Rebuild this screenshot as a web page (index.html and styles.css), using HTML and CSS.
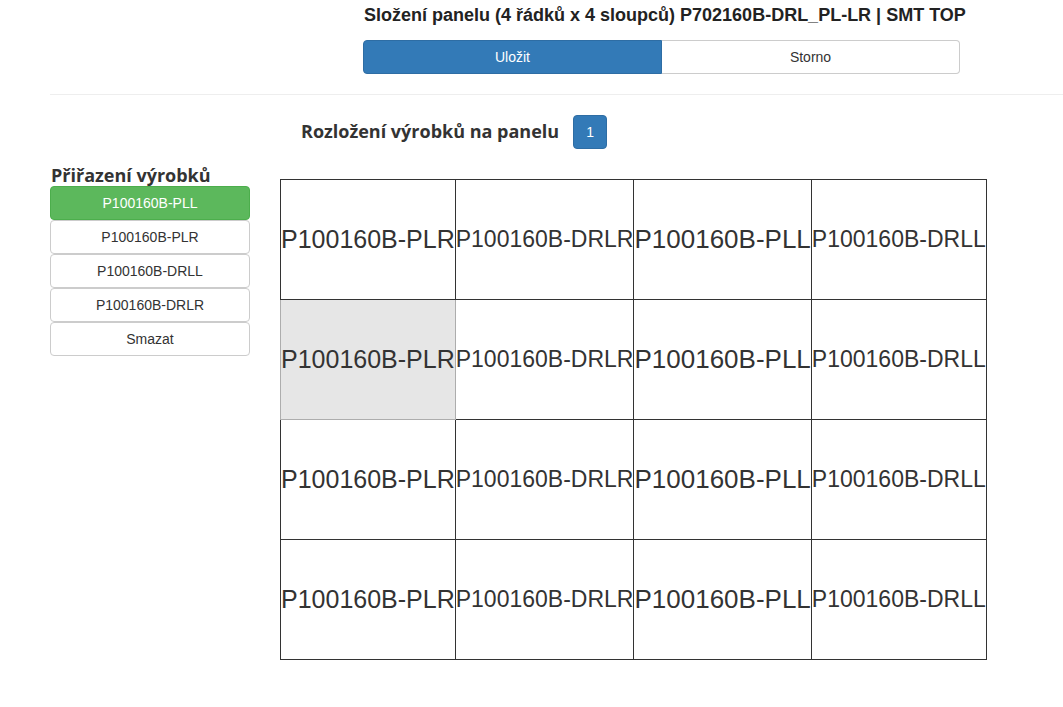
FILE: index.html
```html
<!DOCTYPE html>
<html lang="cs">
<head>
<meta charset="utf-8">
<title>Složení panelu</title>
<link rel="stylesheet" href="styles.css">
</head>
<body>
<div class="top">
  <h1 class="title">Složení panelu (4 řádků x 4 sloupců) P702160B-DRL_PL-LR | SMT TOP</h1>
  <div class="btn-group">
    <button class="btn btn-primary">Uložit</button>
    <button class="btn btn-default">Storno</button>
  </div>
</div>
<div class="divider"></div>
<div class="main">
  <aside class="sidebar">
    <h3 class="side-title">Přiřazení výrobků</h3>
    <div class="vgroup">
      <button class="btn btn-success">P100160B-PLL</button>
      <button class="btn btn-default">P100160B-PLR</button>
      <button class="btn btn-default">P100160B-DRLL</button>
      <button class="btn btn-default">P100160B-DRLR</button>
      <button class="btn btn-default">Smazat</button>
    </div>
  </aside>
  <section class="content">
    <div class="layout-head">
      <h3 class="layout-title">Rozložení výrobků na panelu</h3>
      <span class="badge-btn">1</span>
    </div>
    <table class="grid">
      <tr><td class="c1">P100160B-PLR</td><td class="c2">P100160B-DRLR</td><td class="c3">P100160B-PLL</td><td class="c4">P100160B-DRLL</td></tr>
      <tr><td class="c1 sel">P100160B-PLR</td><td class="c2">P100160B-DRLR</td><td class="c3">P100160B-PLL</td><td class="c4">P100160B-DRLL</td></tr>
      <tr><td class="c1">P100160B-PLR</td><td class="c2">P100160B-DRLR</td><td class="c3">P100160B-PLL</td><td class="c4">P100160B-DRLL</td></tr>
      <tr><td class="c1">P100160B-PLR</td><td class="c2">P100160B-DRLR</td><td class="c3">P100160B-PLL</td><td class="c4">P100160B-DRLL</td></tr>
    </table>
  </section>
</div>
</body>
</html>
```
FILE: styles.css
```css
* { box-sizing: border-box; }
body {
  margin: 0;
  font-family: "Liberation Sans", Arial, sans-serif;
  font-size: 14px;
  color: #333;
  background: #fff;
}
.top {
  margin-left: 363px;
  width: 597px;
  padding-top: 5px;
}
.title {
  margin: 0 0 0 1px;
  font-size: 18px;
  font-weight: bold;
  line-height: 21px;
  white-space: nowrap;
  color: #222;
}
.btn-group {
  display: flex;
  margin-top: 14px;
}
.btn-group .btn {
  flex: 1;
  height: 34px;
}
.btn-group .btn-primary { border-radius: 4px 0 0 4px; }
.btn-group .btn-default { border-radius: 0 4px 4px 0; border-left: 0; }
.btn {
  font-family: "Liberation Sans", Arial, sans-serif;
  font-size: 14px;
  line-height: 20px;
  border: 1px solid #ccc;
  background: #fff;
  color: #333;
  padding: 6px 12px;
  cursor: pointer;
  text-align: center;
}
.btn-primary { background: #337ab7; border-color: #2e6da4; color: #fff; }
.btn-success { background: #5cb85c; border-color: #4cae4c; color: #fff; }
.divider {
  margin: 20px 0 0 50px;
  border-top: 1px solid #eee;
}
.main {
  display: flex;
  padding-left: 50px;
}
.sidebar {
  width: 200px;
  padding-top: 69px;
}
.side-title {
  margin: 0 0 0 1px;
  font-family: "Open Sans", sans-serif;
  font-size: 18px;
  font-weight: bold;
  line-height: 22px;
  color: #333;
}
.vgroup {
  display: flex;
  flex-direction: column;
}
.vgroup .btn {
  height: 34px;
  width: 200px;
  border-radius: 4px;
}
.content {
  margin-left: 30px;
}
.layout-head {
  display: flex;
  align-items: center;
  gap: 14px;
  margin-top: 20px;
  padding-left: 21px;
  height: 34px;
}
.layout-title {
  margin: 0 0 3px 0;
  font-family: "Open Sans", sans-serif;
  font-size: 18px;
  font-weight: bold;
  color: #333;
}
.badge-btn {
  display: inline-flex;
  align-items: center;
  justify-content: center;
  width: 34px;
  height: 34px;
  background: #337ab7;
  border: 1px solid #2e6da4;
  border-radius: 4px;
  color: #fff;
  font-size: 14px;
}
.grid {
  margin-top: 30px;
  border-collapse: collapse;
}
.grid td {
  border: 1px solid #333;
  height: 120px;
  padding: 0;
  text-align: center;
  color: #333;
  white-space: nowrap;
}
.grid td.c1 { font-size: 25px; }
.grid td.c2 { font-size: 23px; }
.grid td.c3 { font-size: 26px; }
.grid td.c4 { font-size: 23px; }
.grid td.sel { background: #e6e6e6; border-color: #adadad; }
```
